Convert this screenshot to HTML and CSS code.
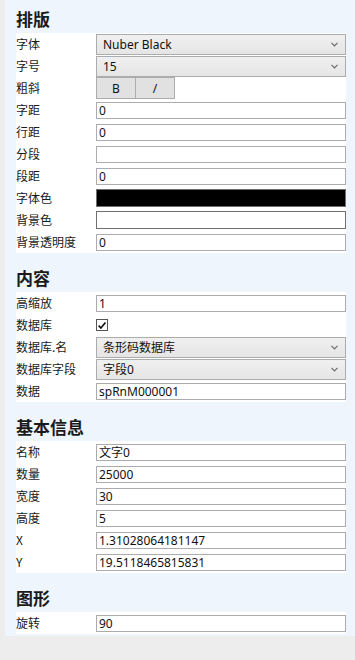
FILE: index.html
```html
<!DOCTYPE html>
<html lang="zh-CN">
<head>
  <meta charset="UTF-8" />
  <meta name="viewport" content="width=device-width, initial-scale=1.0"/>
  <title>属性</title>
  <link rel="stylesheet" href="styles.css">
</head>
<body>

  <div class="panel">

    <!-- 排版 -->
    <div class="section first">
      <h2 class="section-title">排版</h2>
      <div class="rows">
        <div class="row">
          <span class="label">字体</span>
          <div class="select"><span>Nuber Black</span><svg class="chev" width="7" height="5" viewBox="0 0 7 5"><path d="M0.5 0.8 L3.5 3.8 L6.5 0.8" fill="none" stroke="#6a6a6a" stroke-width="1.2"/></svg></div>
        </div>
        <div class="row">
          <span class="label">字号</span>
          <div class="select"><span>15</span><svg class="chev" width="7" height="5" viewBox="0 0 7 5"><path d="M0.5 0.8 L3.5 3.8 L6.5 0.8" fill="none" stroke="#6a6a6a" stroke-width="1.2"/></svg></div>
        </div>
        <div class="row">
          <span class="label">粗斜</span>
          <div class="toggles">
            <button class="toggle">B</button>
            <button class="toggle">/</button>
          </div>
        </div>
        <div class="row">
          <span class="label">字距</span>
          <input class="field" type="text" value="0" />
        </div>
        <div class="row">
          <span class="label">行距</span>
          <input class="field" type="text" value="0" />
        </div>
        <div class="row">
          <span class="label">分段</span>
          <input class="field" type="text" value="" />
        </div>
        <div class="row">
          <span class="label">段距</span>
          <input class="field" type="text" value="0" />
        </div>
        <div class="row">
          <span class="label">字体色</span>
          <div class="swatch black"></div>
        </div>
        <div class="row">
          <span class="label">背景色</span>
          <div class="swatch white"></div>
        </div>
        <div class="row">
          <span class="label">背景透明度</span>
          <input class="field" type="text" value="0" />
        </div>
      </div>
    </div>

    <!-- 内容 -->
    <div class="section">
      <h2 class="section-title">内容</h2>
      <div class="rows">
        <div class="row">
          <span class="label">高缩放</span>
          <input class="field" type="text" value="1" />
        </div>
        <div class="row">
          <span class="label">数据库</span>
          <span class="check"><svg width="11" height="11" viewBox="0 0 11 11"><path d="M1.8 5.6 L4.3 8.2 L9.3 2.2" fill="none" stroke="#111" stroke-width="1.8"/></svg></span>
        </div>
        <div class="row">
          <span class="label">数据库.名</span>
          <div class="select"><span>条形码数据库</span><svg class="chev" width="7" height="5" viewBox="0 0 7 5"><path d="M0.5 0.8 L3.5 3.8 L6.5 0.8" fill="none" stroke="#6a6a6a" stroke-width="1.2"/></svg></div>
        </div>
        <div class="row">
          <span class="label">数据库字段</span>
          <div class="select"><span>字段0</span><svg class="chev" width="7" height="5" viewBox="0 0 7 5"><path d="M0.5 0.8 L3.5 3.8 L6.5 0.8" fill="none" stroke="#6a6a6a" stroke-width="1.2"/></svg></div>
        </div>
        <div class="row">
          <span class="label">数据</span>
          <input class="field" type="text" value="spRnM000001" />
        </div>
      </div>
    </div>

    <!-- 基本信息 -->
    <div class="section">
      <h2 class="section-title">基本信息</h2>
      <div class="rows">
        <div class="row">
          <span class="label">名称</span>
          <input class="field" type="text" value="文字0" />
        </div>
        <div class="row">
          <span class="label">数量</span>
          <input class="field" type="text" value="25000" />
        </div>
        <div class="row">
          <span class="label">宽度</span>
          <input class="field" type="text" value="30" />
        </div>
        <div class="row">
          <span class="label">高度</span>
          <input class="field" type="text" value="5" />
        </div>
        <div class="row">
          <span class="label">X</span>
          <input class="field" type="text" value="1.31028064181147" />
        </div>
        <div class="row">
          <span class="label">Y</span>
          <input class="field" type="text" value="19.5118465815831" />
        </div>
      </div>
    </div>

    <!-- 图形 -->
    <div class="section">
      <h2 class="section-title">图形</h2>
      <div class="rows">
        <div class="row">
          <span class="label">旋转</span>
          <input class="field" type="text" value="90" />
        </div>
      </div>
    </div>

  </div>

</body>
</html>
```

FILE: styles.css
```css
html, body {
  margin: 0;
  height: 100%;
}

body {
  background-color: #ededed;
  font-family: "Noto Sans", "Noto Sans CJK SC", sans-serif;
  font-size: 12px;
  color: #111;
}

.panel {
  margin-left: 5px;
  border-left: 1px solid #f6f6f6;
  background-color: #eef5fd;
  padding: 0 9px 2px 10px;
}

.section {
  padding-top: 6px;
}

.section.first {
  padding-top: 0;
}

.section-title {
  margin: 0;
  height: 33px;
  box-sizing: border-box;
  padding-top: 8px;
  font-family: "Noto Sans CJK SC", sans-serif;
  font-size: 17px;
  font-weight: bold;
  line-height: 22px;
  color: #1a1a1a;
}

.rows {
  background-color: #fff;
}

.row {
  display: grid;
  grid-template-columns: 80px 1fr;
  align-items: center;
  height: 22px;
}

.label {
  font-family: "Noto Sans CJK SC", sans-serif;
  font-size: 12px;
  line-height: 22px;
  color: #1a1a1a;
}

.field {
  box-sizing: border-box;
  height: 17px;
  width: 100%;
  margin: 0;
  padding: 0 2px;
  border: 1px solid #acacb0;
  background: #fff;
  font-family: "Noto Sans", "Noto Sans CJK SC", sans-serif;
  font-size: 12px;
  color: #111;
  outline: none;
}

.select {
  box-sizing: border-box;
  height: 21px;
  display: flex;
  align-items: center;
  justify-content: space-between;
  padding: 0 7px 0 6px;
  border: 1px solid #acacac;
  background: linear-gradient(#f0f0f0, #e5e5e5);
  font-size: 12px;
}

.chev {
  display: block;
}

.toggles {
  display: flex;
  height: 22px;
  align-items: center;
}

.toggle {
  box-sizing: border-box;
  width: 40px;
  height: 22px;
  margin: 0 -1px 0 0;
  padding: 0;
  border: 1px solid #adadad;
  background-color: #e1e1e1;
  font-family: "Noto Sans", sans-serif;
  font-size: 12px;
  color: #111;
}

.swatch {
  box-sizing: border-box;
  height: 18px;
  border: 1px solid #707070;
}

.swatch.black {
  background-color: #000;
}

.swatch.white {
  background-color: #fff;
}

.check {
  box-sizing: border-box;
  width: 12px;
  height: 12px;
  border: 1px solid #555;
  display: flex;
  align-items: center;
  justify-content: center;
}
```
